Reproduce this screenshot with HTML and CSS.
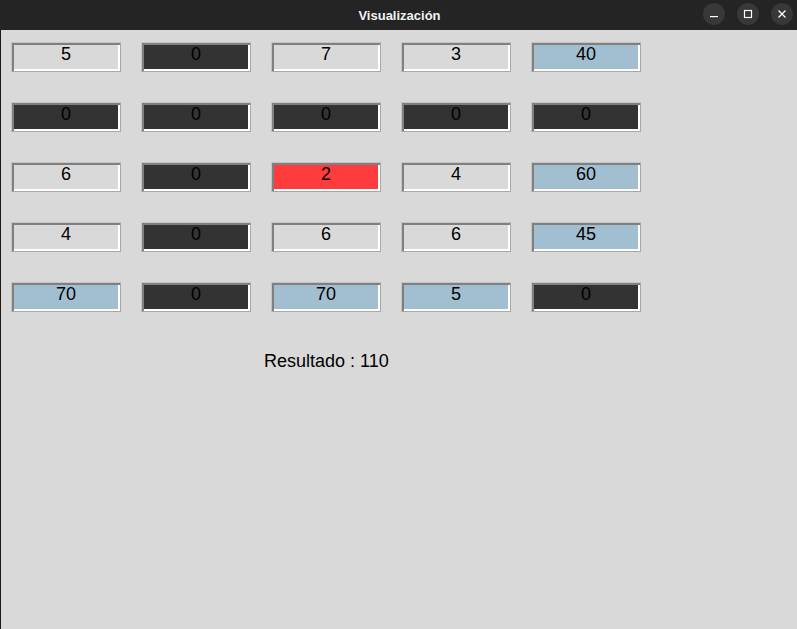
FILE: index.html
```html
<!DOCTYPE html>
<html lang="es">
<head>
<meta charset="utf-8">
<title>Visualización</title>
<link rel="stylesheet" href="styles.css">
</head>
<body>
<div class="window">
  <header class="titlebar">
    <span class="title">Visualización</span>
    <div class="controls">
      <span class="ctl"><svg width="10" height="10" viewBox="0 0 10 10"><rect x="1" y="7" width="8" height="1.2" fill="#fff"/></svg></span>
      <span class="ctl"><svg width="10" height="10" viewBox="0 0 10 10"><rect x="1.5" y="1.5" width="7" height="7" fill="none" stroke="#fff" stroke-width="1.2"/></svg></span>
      <span class="ctl"><svg width="10" height="10" viewBox="0 0 10 10"><path d="M1.5 1.5L8.5 8.5M8.5 1.5L1.5 8.5" stroke="#fff" stroke-width="1.3"/></svg></span>
    </div>
  </header>
  <main class="content">
    <div class="grid">
      <div class="cell light">5</div><div class="cell dark">0</div><div class="cell light">7</div><div class="cell light">3</div><div class="cell blue">40</div>
      <div class="cell dark">0</div><div class="cell dark">0</div><div class="cell dark">0</div><div class="cell dark">0</div><div class="cell dark">0</div>
      <div class="cell light">6</div><div class="cell dark">0</div><div class="cell red">2</div><div class="cell light">4</div><div class="cell blue">60</div>
      <div class="cell light">4</div><div class="cell dark">0</div><div class="cell light">6</div><div class="cell light">6</div><div class="cell blue">45</div>
      <div class="cell blue">70</div><div class="cell dark">0</div><div class="cell blue">70</div><div class="cell blue">5</div><div class="cell dark">0</div>
    </div>
    <p class="result">Resultado : 110</p>
  </main>
</div>
</body>
</html>
```
FILE: styles.css
```css
html, body {
  margin: 0;
  padding: 0;
  height: 100%;
  background: #d9d9d9;
}
.window {
  display: flex;
  flex-direction: column;
  height: 629px;
  width: 797px;
  overflow: hidden;
}
.titlebar {
  height: 30px;
  flex: none;
  background: #242424;
  display: flex;
  align-items: center;
  justify-content: center;
  position: relative;
}
.title {
  color: #f2f2f2;
  font-family: "Liberation Sans", Arial, sans-serif;
  font-weight: bold;
  font-size: 13px;
  padding-left: 2px;
}
.controls {
  position: absolute;
  right: 4px;
  top: 3px;
  display: flex;
  gap: 12px;
}
.ctl {
  width: 22px;
  height: 22px;
  border-radius: 50%;
  background: #383838;
  display: flex;
  align-items: center;
  justify-content: center;
}
.content {
  flex: 1;
  border-left: 1px solid #1a1a1a;
  padding: 12px 0 0 10px;
}
.grid {
  display: grid;
  grid-template-columns: repeat(5, 110px);
  grid-auto-rows: 30px;
  column-gap: 20px;
  row-gap: 30px;
}
.cell {
  box-sizing: border-box;
  border: 1px solid #a8a8a8;
  border-top-color: #c4c4c4;
  border-left-color: #c4c4c4;
  box-shadow: inset 2px 2px 0 #808080, inset -2px -2px 0 #ffffff;
  font-family: "Liberation Sans", Arial, sans-serif;
  font-size: 18px;
  line-height: 23px;
  text-align: center;
  color: #000;
}
.light { background: #d9d9d9; }
.dark { background: #333333; color: #000; }
.red { background: #ff3c3c; }
.blue { background: #a1bfd0; }
.result {
  margin: 38px 0 0 253px;
  font-family: "Liberation Sans", Arial, sans-serif;
  font-size: 18px;
  line-height: 22px;
  color: #000;
}
```
